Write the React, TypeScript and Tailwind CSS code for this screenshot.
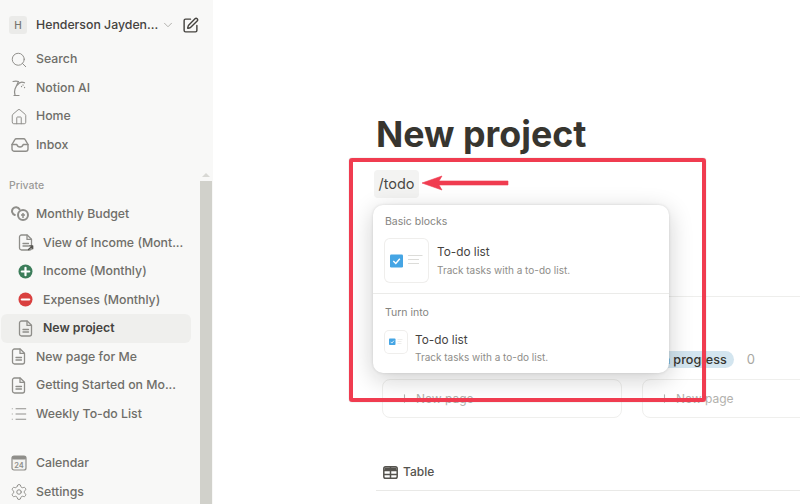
import React from "react";
import { Search, Home, Settings, List, ChevronDown, SquarePen, Plus } from "lucide-react";

const Doc = ({ arrow = false }: { arrow?: boolean }) => (
  <svg width="16" height="17" viewBox="0 0 16 17" fill="none" stroke="#8f8e8a" strokeWidth="1.3" strokeLinejoin="round" strokeLinecap="round">
    <path d="M3.500 1h5.700L13.500 5.300V14a2 2 0 0 1-2 2h-8a2 2 0 0 1-2-2V3a2 2 0 0 1 2-2Z" />
    <path d="M9 1.200V5.400h4.300" />
    <path d="M5 9.500h5.500M5 12h5.500" />
    {arrow && <path d="M10.500 15.500l4-3.600M11.500 11.800h3.200v3" stroke="#55534e" />}
  </svg>
);

const Ai = () => (
  <svg width="17" height="18" viewBox="0 0 17 18" fill="none" stroke="#8f8e8a" strokeWidth="1.2" strokeLinecap="round" strokeLinejoin="round">
    <path d="M2 2.500c2-.4 3.800-.4 5.500 0L4 10c-.6 1.700-.6 3.500 0 6" />
    <path d="M3 16.500h5" />
    <path d="M6.500 6c1.500-2.500 4-3.500 7-2.200M10.500 7.500l.1.1M13.500 8.500l.1.1M12 6l.1.1" />
  </svg>
);

const Inbox = () => (
  <svg width="18" height="16" viewBox="0 0 18 16" fill="none" stroke="#8f8e8a" strokeWidth="1.4" strokeLinejoin="round" strokeLinecap="round">
    <path d="M1 7.500 3.700 2.800A2 2 0 0 1 5.500 1.700h7A2 2 0 0 1 14.300 2.800L17 7.500V12a2.300 2.300 0 0 1-2.300 2.300H3.300A2.300 2.300 0 0 1 1 12Z" />
    <path d="M1 7.500h4.800c.5 1.700 1.700 2.500 3.200 2.500s2.700-.8 3.200-2.500H17" />
  </svg>
);

const Coins = () => (
  <svg width="19" height="16" viewBox="0 0 19 16" fill="none">
    <path d="M8.500 3.200A4 4 0 1 0 3.800 9" stroke="#8f8e8a" strokeWidth="2" strokeLinecap="round" />
    <circle cx="12" cy="9" r="5" stroke="#8f8e8a" strokeWidth="2" />
    <path d="M10 9h4M12 7v5" stroke="#8f8e8a" strokeWidth="1.500" />
  </svg>
);

const Round = ({ color, plus }: { color: string; plus?: boolean }) => (
  <svg width="15" height="15" viewBox="0 0 15 15">
    <circle cx="7.500" cy="7.500" r="7" fill={color} />
    <path d="M3.800 7.500h7.400" stroke="#fff" strokeWidth="2.200" strokeLinecap="round" />
    {plus && <path d="M7.500 3.800v7.400" stroke="#fff" strokeWidth="2.200" strokeLinecap="round" />}
  </svg>
);

const Cal = () => (
  <svg width="16" height="16" viewBox="0 0 16 16">
    <rect x="1" y="1" width="14" height="14" rx="2" fill="#f3f3f1" stroke="#8f8e8a" strokeWidth="1.200" />
    <rect x="1" y="1" width="14" height="3.500" rx="1.500" fill="#8f8e8a" />
    <text x="8" y="12.800" textAnchor="middle" fontSize="7.500" fontWeight="600" fill="#8f8e8a" fontFamily="Inter, sans-serif">24</text>
  </svg>
);

const TableIcon = () => (
  <svg width="15" height="13" viewBox="0 0 15 13" fill="none" stroke="#55534e" strokeWidth="1.500">
    <rect x="0.800" y="0.800" width="13.400" height="11.400" rx="1.800" />
    <path d="M1 4.600h13M1 8.400h13M7.500 1v11" />
    <path d="M1.500 1.500h12V4h-12Z" fill="#55534e" stroke="none" />
  </svg>
);

const Tile = ({ small }: { small?: boolean }) =>
  small ? (
    <div className="flex h-[22px] w-[22px] shrink-0 items-center justify-center rounded-[4px] bg-white shadow-[0_0_0_1px_#efeeec]">
      <svg width="14" height="8" viewBox="0 0 14 8">
        <rect x="0" y="0.500" width="6.500" height="6.500" rx="0.800" fill="#45a5e4" />
        <path d="M1.600 3.800l1.300 1.300 2-2.400" fill="none" stroke="#fff" strokeWidth="0.800" />
        <path d="M8.500 1.500h5M8.500 3.500h4M8.500 5.500h4" stroke="#ececea" strokeWidth="0.900" />
      </svg>
    </div>
  ) : (
    <div className="flex h-[43px] w-[43px] shrink-0 items-center justify-center rounded-[5px] bg-white shadow-[0_0_0_1px_#efeeec]">
      <svg width="33" height="14" viewBox="0 0 33 14">
        <rect x="0" y="0.500" width="13" height="13" rx="1.200" fill="#45a5e4" />
        <path d="M3.300 7l2.500 2.500 4-4.800" fill="none" stroke="#fff" strokeWidth="1.400" />
        <path d="M18 1.500h14.500M18 5.500h11M18 9.500h11" stroke="#dcdcd9" strokeWidth="1" />
      </svg>
    </div>
  );

const Row = ({ icon, label, indent, active }: { icon: React.ReactNode; label: string; indent?: boolean; active?: boolean }) => (
  <div className={`flex h-[28.5px] items-center rounded-md ${active ? "bg-[#efefed] font-semibold text-[#45433f]" : "font-medium text-[#6f6e69]"} ${indent ? "pl-[17px]" : "pl-[10px]"}`}>
    <span className="flex w-[25px] shrink-0 items-center justify-start">{icon}</span>
    <span className="whitespace-nowrap">{label}</span>
  </div>
);

const iconCls = "-ml-px text-[#8f8e8a]";

export default function App() {
  return (
    <div className="flex h-[504px] w-[800px] overflow-hidden bg-white font-['Inter',sans-serif] text-[12px]">
      <aside className="relative flex h-full w-[213px] shrink-0 bg-[#f8f8f7] text-[12.300px]">
        <div className="flex w-[191px] shrink-0 flex-col pl-px">
          <div className="mt-[16px] flex h-[20px] items-center pl-[8px] pr-0">
            <span className="flex h-[18px] w-[18px] shrink-0 items-center justify-center rounded-[3px] bg-[#ebebe9] text-[10px] font-medium text-[#76756f]">H</span>
            <span className="ml-[9px] w-[118px] shrink-0 whitespace-nowrap font-medium text-[#45433f]">Henderson Jayden...</span>
            <ChevronDown size={14} className="ml-[7px] shrink-0 text-[#a8a7a2]" strokeWidth={1.500} />
            <SquarePen size={17} className="ml-[7px] shrink-0 text-[#45433f]" strokeWidth={2} />
          </div>
          <div className="mt-[11px] flex flex-col">
            <Row icon={<Search size={18} strokeWidth={1.300} className={iconCls} />} label="Search" />
            <Row icon={<Ai />} label="Notion AI" />
            <Row icon={<Home size={18} strokeWidth={1.300} className={iconCls} />} label="Home" />
            <Row icon={<Inbox />} label="Inbox" />
          </div>
          <div className="mt-[19px] flex h-[20px] items-center pl-[8px] text-[10.500px] font-medium text-[#9b9a97]">Private</div>
          <div className="mt-[6px] flex flex-col">
            <Row icon={<Coins />} label="Monthly Budget" />
            <Row indent icon={<Doc arrow />} label="View of Income (Mont..." />
            <Row indent icon={<Round color="#3c7d5a" plus />} label="Income (Monthly)" />
            <Row indent icon={<Round color="#d9403f" />} label="Expenses (Monthly)" />
            <Row indent active icon={<Doc />} label="New project" />
            <Row icon={<Doc />} label="New page for Me" />
            <Row icon={<Doc />} label="Getting Started on Mo..." />
            <Row icon={<List size={18} strokeWidth={1.300} className={iconCls} />} label="Weekly To-do List" />
          </div>
          <div className="mt-[21px] flex flex-col">
            <Row icon={<Cal />} label="Calendar" />
            <Row icon={<Settings size={18} strokeWidth={1.300} className={iconCls} />} label="Settings" />
          </div>
        </div>
        <div className="ml-[9px] flex w-[12px] flex-col items-center">
          <div className="mt-[173px] h-0 w-0 border-x-[4px] border-b-[4px] border-x-transparent border-b-[#d8d8d4]" />
          <div className="mt-[4px] w-full flex-1 bg-[#d1d1cb]" />
        </div>
      </aside>

      <main className="relative min-w-0 flex-1">
        <div className="pl-[163px]">
          <h1 className="mt-[112px] h-[44px] text-[35.800px] font-bold leading-[44px] text-[#37352f]">New project</h1>
          <div className="ml-[-2px] mt-[14px] flex h-[28px] w-[45px] items-center justify-center rounded-[4px] bg-[#f3f3f2] text-[14.500px] text-[#4a4944]">/todo</div>
          <div className="mt-[98px] h-px bg-[#eeeeec]" />
          <div className="ml-[276px] mt-[54px] flex h-[17px] items-center">
            <span className="rounded-full bg-[#d3e5ef] px-[7px] text-[12.600px] font-medium leading-[17px] text-[#37352f]">In progress</span>
            <span className="ml-[13px] text-[13px] text-[#a8a7a2]">0</span>
          </div>
          <div className="ml-[6px] mt-[11px] flex gap-[20px]">
            {[0, 1].map((i) => (
              <div key={i} className="flex h-[39px] w-[240px] shrink-0 items-center gap-[5px] rounded-lg border border-[#efefed] pl-[15px] text-[#b2b1ad]">
                <Plus size={13} />
                <span>New page</span>
              </div>
            ))}
          </div>
          <div className="ml-[7px] mt-[45px] flex h-[18px] items-center gap-[5px] font-medium text-[#55534e]">
            <TableIcon />
            <span>Table</span>
          </div>
          <div className="mt-[9px] h-px bg-[#e9e9e7]" />
        </div>

        <div className="absolute left-[160px] top-[205px] w-[296px] rounded-[10px] bg-white shadow-[0_6px_24px_rgba(15,15,15,0.2),0_0_3px_rgba(15,15,15,0.12)]">
          <div className="border-b border-[#ebebe9] pb-[11px]">
            <div className="pl-[12px] pt-[10px] text-[10.500px] font-normal leading-[14px] text-[#85847f]">Basic blocks</div>
            <div className="mt-[10px] flex items-center gap-[9px] pl-[12px]">
              <Tile />
              <div className="flex flex-col">
                <span className="text-[11.800px] leading-[16px] text-[#45433f]">To-do list</span>
                <span className="mt-[3px] text-[10px] leading-[14px] text-[#8e8d89]">Track tasks with a to-do list.</span>
              </div>
            </div>
          </div>
          <div className="pb-[9px]">
            <div className="pl-[12px] pt-[12px] text-[10.500px] font-normal leading-[14px] text-[#85847f]">Turn into</div>
            <div className="mt-[11px] flex items-start gap-[8px] pl-[12px]">
              <Tile small />
              <div className="flex flex-col">
                <span className="mt-[1px] text-[11.800px] leading-[16px] text-[#45433f]">To-do list</span>
                <span className="mt-[2px] text-[10px] leading-[14px] text-[#8e8d89]">Track tasks with a to-do list.</span>
              </div>
            </div>
          </div>
        </div>

        <div className="absolute left-[136px] top-[158px] h-[244px] w-[357px] rounded-[3px] border-[4px] border-[#f03c50] shadow-[0_0_1px_rgba(0,0,0,0.4)]" />
        <svg className="absolute left-[208px] top-[175px]" width="90" height="16" viewBox="0 0 90 16">
          <path d="M87 6H18L21 1 1 8l20 7-3-5h69Z" fill="#f03c50" stroke="#f03c50" strokeWidth="0.600" strokeLinejoin="round" />
        </svg>
      </main>
    </div>
  );
}
